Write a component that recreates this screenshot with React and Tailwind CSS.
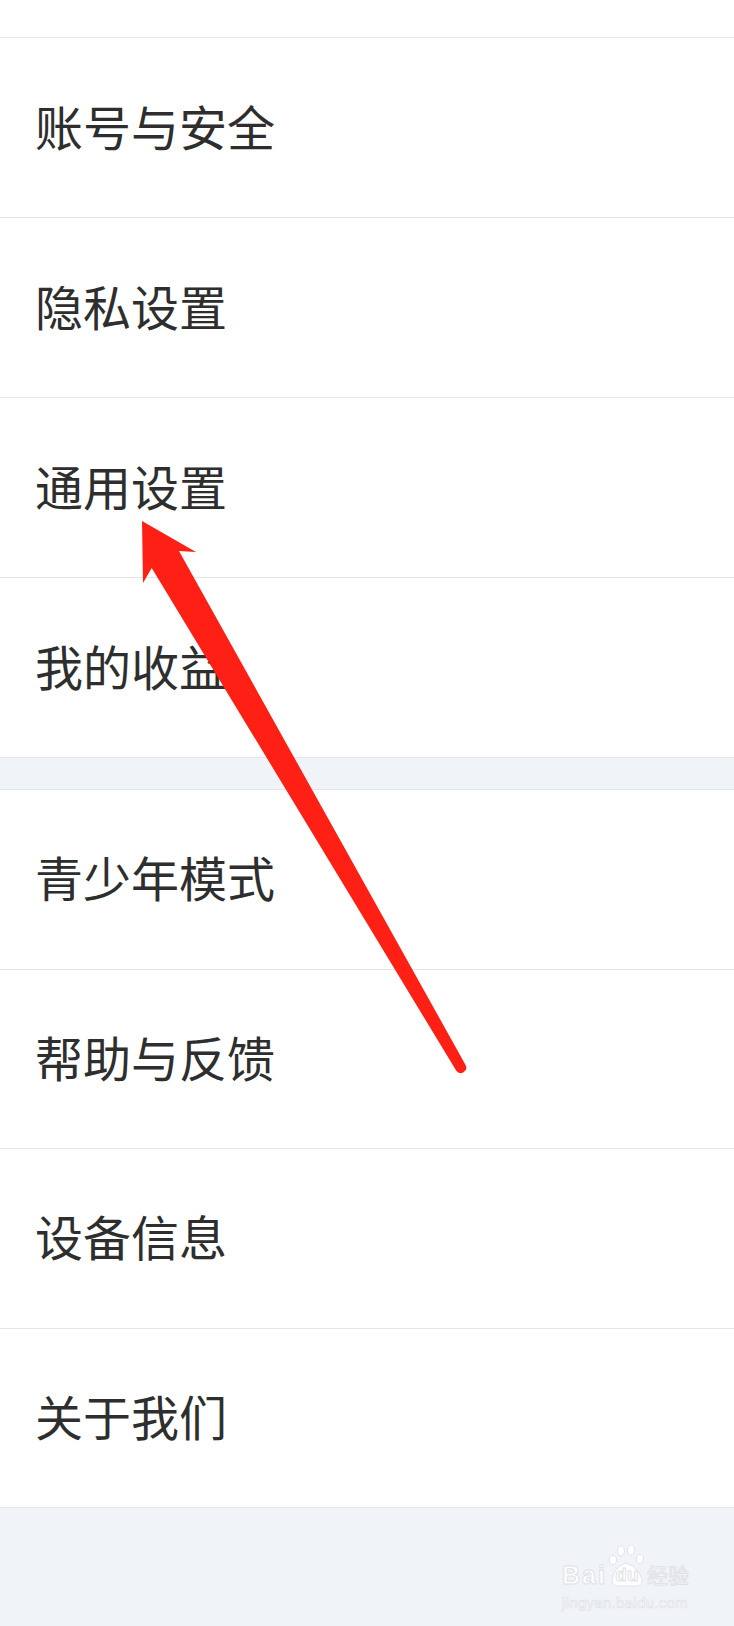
import React from "react";

const groupOne = ["账号与安全", "隐私设置", "通用设置", "我的收益"];
const groupTwo = ["青少年模式", "帮助与反馈", "设备信息", "关于我们"];

const Row = ({ label, tall }) => (
  <div
    className={
      "flex items-center border-b border-[#e6e6e6] bg-white pb-[6px] pl-[35px] " +
      (tall ? "h-[180px]" : "h-[179.5px]")
    }
  >
    <span className="text-[48px] leading-none text-[#2e2e2e]">{label}</span>
  </div>
);

const Arrow = () => (
  <svg
    className="pointer-events-none absolute left-0 top-0"
    width="734"
    height="1626"
    viewBox="0 0 734 1626"
  >
    <path
      d="M142 521 L196 552 L179 551 L465.7 1065.2 A5.5 5.5 0 0 1 456.3 1070.8 L151.7 568 L143 583 Z"
      fill="#fe2014"
    />
  </svg>
);

// faint "Baidu 经验" watermark in the bottom corner
const Watermark = () => (
  <div className="pointer-events-none absolute left-[562px] top-[1545px] flex w-[132px] flex-col font-['Liberation_Sans','Noto_Sans_CJK_SC',sans-serif] text-white">
    <div className="flex h-[42px] items-end">
      <span className="mb-[-1px] text-[25px] font-bold leading-none tracking-[2px] [-webkit-text-stroke:1px_#dfe2e6]">
        Bai
      </span>
      <span className="relative flex h-[42px] w-[40px] items-end justify-center">
        <svg className="absolute left-0 top-0" width="40" height="42" viewBox="0 0 40 42">
          <g fill="#ffffff" stroke="#dfe2e6" strokeWidth="1">
            <ellipse cx="14" cy="6" rx="3.5" ry="5" />
            <ellipse cx="24" cy="5" rx="3.5" ry="5" />
            <ellipse cx="6" cy="15" rx="3.5" ry="4.5" />
            <ellipse cx="33" cy="14" rx="3.5" ry="4.5" />
            <path d="M5 35 Q6 23 19 18 Q33 23 35 35 Q35 41 29 41 L11 41 Q5 41 5 35 Z" />
          </g>
        </svg>
        <span className="relative mb-[3px] text-[19px] font-bold leading-none text-white [-webkit-text-stroke:1px_#dfe2e6]">
          du
        </span>
      </span>
      <span className="mb-[1px] text-[21px] leading-none [-webkit-text-stroke:1px_#dfe2e6]">
        经验
      </span>
    </div>
    <div className="mt-[8px] text-[15px] leading-none tracking-[0.3px] [-webkit-text-stroke:0.7px_#dfe2e6]">
      jingyan.baidu.com
    </div>
  </div>
);

export default function App() {
  return (
    <div className="relative min-h-[1626px] bg-[#f0f3f7] font-['Noto_Sans_CJK_SC','Noto_Sans',sans-serif]">
      <div className="h-[38px] border-b border-[#e6e6e6] bg-white" />
      {groupOne.map((label) => (
        <Row key={label} label={label} tall />
      ))}
      <div className="h-[32px] border-b border-[#e6e6e6] bg-[#f0f3f7]" />
      {groupTwo.map((label) => (
        <Row key={label} label={label} />
      ))}
      <Arrow />
      <Watermark />
    </div>
  );
}
